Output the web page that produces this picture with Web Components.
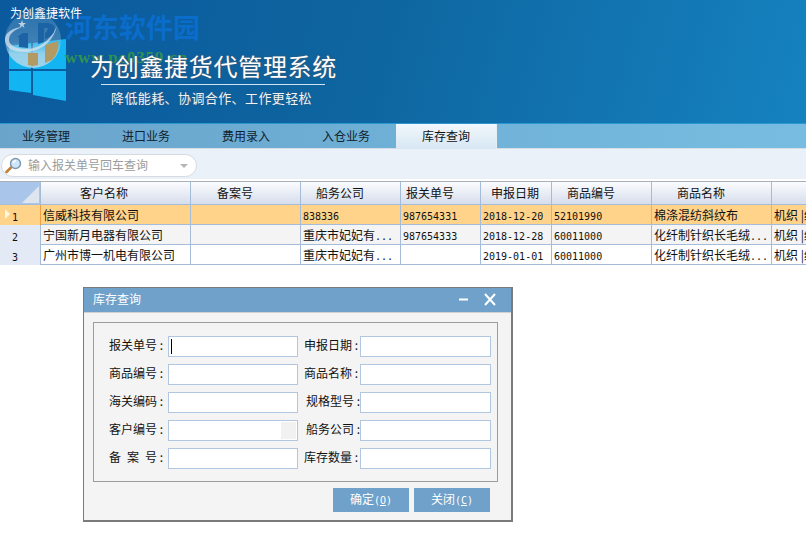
<!DOCTYPE html>
<html lang="zh-CN">
<head>
<meta charset="utf-8">
<title>为创鑫捷货代管理系统</title>
<style>
    html, body { margin: 0; height: 100%; background: #fff; overflow: hidden; }
    body { font: 12px "Noto Sans CJK SC", sans-serif; color: #111; position: relative; }
</style>
</head>
<body>
<app-banner></app-banner>
<nav-tabs>
    <tab-item>业务管理</tab-item>
    <tab-item>进口业务</tab-item>
    <tab-item>费用录入</tab-item>
    <tab-item>入仓业务</tab-item>
    <tab-item active>库存查询</tab-item>
</nav-tabs>
<search-box placeholder="输入报关单号回车查询"></search-box>
<data-grid></data-grid>
<query-dialog heading="库存查询">
    <form-field label="报关单号 :" caret></form-field>
    <form-field label="申报日期 :" style="--box-width:131px"></form-field>
    <form-field label="商品编号 :"></form-field>
    <form-field label="商品名称 :" style="--box-width:131px"></form-field>
    <form-field label="海关编码 :"></form-field>
    <form-field label="规格型号 :" style="--label-left:2px;--box-width:131px"></form-field>
    <form-field label="客户编号 :" picker></form-field>
    <form-field label="船务公司 :" style="--label-left:2px;--box-width:131px"></form-field>
    <form-field label="备&#8194;案&#8194;号 :"></form-field>
    <form-field label="库存数量 :" style="--box-width:131px"></form-field>
    <dlg-button slot="footer" key="O">确定</dlg-button>
    <dlg-button slot="footer" key="C">关闭</dlg-button>
</query-dialog>

<script>
// top banner with logo, watermark and product title
class AppBanner extends HTMLElement {
    constructor() {
        super();
        this.attachShadow({mode: "open"});
        this.shadowRoot.innerHTML = `
            <style>
                :host {
                    display: block;
                    height: 124px;
                    box-sizing: border-box;
                    position: relative;
                    overflow: hidden;
                    padding: 6px 0 0 10px;
                    color: #fff;
                    background: linear-gradient(105deg, #0b5a9e 0%, #0e659f 45%, #1582c0 100%);
                    border-bottom: 1px solid #2a97d0;
                }
                .caption { line-height: 13px; position: relative; z-index: 3; }
                .logo { position: absolute; left: 0; top: 0; z-index: 1; }
                .mark {
                    position: absolute; left: 65px; top: 10px; z-index: 1;
                    font: 700 27px/34px "Noto Sans CJK SC", sans-serif;
                    color: #0a6ccb; white-space: nowrap;
                }
                .url {
                    position: absolute; left: 65px; top: 49px; z-index: 1;
                    font: 700 17px/18px "Liberation Serif", serif;
                    letter-spacing: .8px; color: #2f9350; white-space: nowrap;
                }
                .title {
                    position: relative; z-index: 2;
                    margin: 32px 0 0 80px;
                    font-size: 24px; line-height: 30px; letter-spacing: .7px;
                    white-space: nowrap;
                    text-shadow: 0 0 3px #3c5a76, 0 0 1px #3c5a76;
                }
                .rule { position: relative; z-index: 2; height: 1px; width: 224px; margin: 3px 0 0 91px; background: #cfe3f2; }
                .sub {
                    position: relative; z-index: 2;
                    margin: 3px 0 0 101px;
                    font-size: 13px; line-height: 19px; letter-spacing: .4px;
                    white-space: nowrap; color: #eef4f8;
                    text-shadow: 0 0 2px #3c5a76;
                }
            </style>
            <svg class="logo" width="70" height="105" viewBox="0 0 70 105">
                <defs>
                    <linearGradient id="disc" x1="0" y1="0" x2="0" y2="1">
                        <stop offset="0" stop-color="#a9cfe6" stop-opacity=".2"/>
                        <stop offset=".55" stop-color="#a9cfe6" stop-opacity=".32"/>
                        <stop offset=".75" stop-color="#b5d8ea" stop-opacity=".8"/>
                        <stop offset="1" stop-color="#b5d8ea" stop-opacity=".85"/>
                    </linearGradient>
                </defs>
                <polygon points="9,46 31,43 31,69 9,69" fill="#12b5f2"/>
                <polygon points="33,43 66,39 66,69 33,69" fill="#12b5f2"/>
                <polygon points="9,71 31,71 31,93 9,90" fill="#12b5f2"/>
                <polygon points="33,71 66,71 66,101 33,95" fill="#12b5f2"/>
                <circle cx="33" cy="40" r="28" fill="url(#disc)"/>
                <path d="M28 53 H38 V65 L33 66 L28 65Z" fill="#b39a62"/>
                <path d="M45 45 L58 41 Q60 52 52 60 L45 63Z" fill="#b39a62"/>
                <path d="M22 27 C12 28 4 33 5 41 C6 48 13 52 24 52 C38 52 52 45 57 26 C52 37 42 49 26 49 C16 49 9 45 9 40 C9 34 14 30 22 27Z" fill="#d5e3ee" fill-opacity=".75"/>
                <path d="M19 47 V37 H17 L23 33 H28 V48Z" fill="#1c63a6"/>
                <path d="M38 44 V23 H48 Q57 24 54 32 Q50 38 45 39 V33 Q48 31 48 28 H44 V42Z" fill="#1c63a6"/>
                <polygon points="22,20 23,23 26,23 23.5,25 24.5,28 22,26 19.5,28 20.5,25 18,23 21,23" fill="#b9d0e4"/>
            </svg>
            <div class="mark">河东软件园</div>
            <div class="url">www.pc0359.cn</div>
            <div class="caption">为创鑫捷软件</div>
            <div class="title">为创鑫捷货代管理系统</div>
            <div class="rule"></div>
            <div class="sub">降低能耗、协调合作、工作更轻松</div>
        `;
    }
}
customElements.define('app-banner', AppBanner);

class NavTabs extends HTMLElement {
    constructor() {
        super();
        this.attachShadow({mode: "open"});
        this.shadowRoot.innerHTML = `
            <style>
                :host {
                    display: flex;
                    height: 25px;
                    box-sizing: border-box;
                    margin-left: -4px;
                    background: linear-gradient(90deg, #6aa4cb 0%, #6fb0d6 50%, #78bde1 100%);
                    border-bottom: 1px solid #d5dde6;
                }
            </style>
            <slot></slot>
        `;
    }
}
customElements.define('nav-tabs', NavTabs);

class TabItem extends HTMLElement {
    constructor() {
        super();
        this.attachShadow({mode: "open"});
        this.shadowRoot.innerHTML = `
            <style>
                :host {
                    display: block;
                    width: 100px;
                    height: 24px;
                    box-sizing: border-box;
                    padding-left: 26px;
                    line-height: 24px;
                    color: #10222f;
                }
                :host([active]) {
                    width: 101px;
                    height: 25px;
                    background: linear-gradient(#f2f7fb, #d6e7f3);
                    border-right: 1px solid #e6eef5;
                    color: #111;
                }
            </style>
            <slot></slot>
        `;
    }
}
customElements.define('tab-item', TabItem);

class SearchBox extends HTMLElement {
    constructor() {
        super();
        this.attachShadow({mode: "open"});
        this.shadowRoot.innerHTML = `
            <style>
                :host {
                    display: block;
                    height: 32px;
                    box-sizing: border-box;
                    padding: 5px 0 0 1px;
                    background: linear-gradient(#eaf1f9 30px, #fff 30px);
                }
                .pill {
                    display: flex;
                    align-items: center;
                    gap: 5px;
                    width: 196px;
                    height: 23px;
                    box-sizing: border-box;
                    padding: 0 8px 0 3px;
                    background: #fff;
                    border: 1px solid #d5dae1;
                    border-radius: 12px;
                }
                .hint { flex: 1; color: #9c9c9c; white-space: nowrap; line-height: 19px; padding-bottom: 2px; }
                .arrow { width: 0; height: 0; border: 4px solid transparent; border-top: 4px solid #b5b5b5; border-bottom: 0; }
            </style>
            <div class="pill">
                <svg width="18" height="17" viewBox="0 0 18 17">
                    <path d="M6 10.5 L1.5 15" stroke="#c5813a" stroke-width="2.6" stroke-linecap="round"/>
                    <circle cx="10.5" cy="6.5" r="5" fill="#cfe6f8" stroke="#7d97ad" stroke-width="1.4"/>
                    <path d="M8 6 Q8.5 4 11 3.6" stroke="#fff" stroke-width="1.4" fill="none"/>
                </svg>
                <span class="hint"></span>
                <span class="arrow"></span>
            </div>
        `;
    }

    connectedCallback() {
        this.shadowRoot.querySelector('.hint').textContent = this.getAttribute('placeholder');
    }
}
customElements.define('search-box', SearchBox);

// the columns, and how far each header caption sits from its column's left edge
const COLUMNS = [
    {title: "客户名称", width: 150, left: 39},
    {title: "备案号", width: 110, left: 26},
    {title: "船务公司", width: 100, left: 15},
    {title: "报关单号", width: 80, left: 5},
    {title: "申报日期", width: 71, left: 10},
    {title: "商品编号", width: 100, left: 15},
    {title: "商品名称", width: 120, left: 25},
    {title: "", width: 60, left: 0}
];

// values starting with # are the narrow digit cells
const ROWS = [
    ["信威科技有限公司", "", "#838336", "#987654331", "#2018-12-20", "#52101990", "棉涤混纺斜纹布", "机织 |经纬"],
    ["宁国新月电器有限公司", "", "重庆市妃妃有...", "#987654333", "#2018-12-28", "#60011000", "化纤制针织长毛绒...", "机织 |经纬"],
    ["广州市博一机电有限公司", "", "重庆市妃妃有...", "", "#2019-01-01", "#60011000", "化纤制针织长毛绒...", "机织 |经纬"]
];

class DataGrid extends HTMLElement {
    constructor() {
        super();
        this.attachShadow({mode: "open"});
    }

    connectedCallback() {
        const template = "41px " + COLUMNS.map(c => c.width + "px").join(" ");
        const head = COLUMNS.map(c =>
            `<div class="hd" style="padding-left:${c.left}px">${c.title}</div>`).join("");
        const body = ROWS.map((row, i) => {
            const cells = row.map(v => {
                if (v.startsWith("#")) return `<div class="td"><span class="num">${v.slice(1)}</span></div>`;
                return `<div class="td">${v.replace("...", '<span class="num">...</span>')}</div>`;
            }).join("");
            return `<div class="row r${i}"><div class="no">${i + 1}</div>${cells}</div>`;
        }).join("");
        this.shadowRoot.innerHTML = `
            <style>
                :host {
                    display: block;
                    overflow: hidden;
                    border-top: 1px solid #a8b0ba;
                }
                .row { display: grid; grid-template-columns: ${template}; height: 20px; box-sizing: border-box; border-bottom: 1px solid #a5bcd9; white-space: nowrap; }
                .head { height: 23px; border-bottom: 1px solid #a5bcd9; background: linear-gradient(#fbfcfe, #d6ddec); }
                .corner { background: #a9c6ea; border-right: 1px solid #a5bcd9; position: relative; box-sizing: border-box; }
                .corner::after {
                    content: ""; position: absolute; right: 1px; bottom: 1px;
                    width: 0; height: 0;
                    border-left: 17px solid transparent;
                    border-bottom: 17px solid #dfe5ef;
                }
                .hd { box-sizing: border-box; border-right: 1px solid #a5bcd9; line-height: 22px; overflow: hidden; color: #111; }
                .no { box-sizing: border-box; border-right: 1px solid #a5bcd9; background: #e3e9f5; padding: 6px 0 0 12px; font: 10px/14px "DejaVu Sans Mono", monospace; position: relative; }
                .td { box-sizing: border-box; border-right: 1px solid #a5bcd9; padding-left: 2px; line-height: 19px; overflow: hidden; }
                .num { font: 10px/19px "DejaVu Sans Mono", monospace; }
                .r0 { background: #ffd38a; }
                .r0 .no { background: #ffd38a; border-right-color: #f0a040; box-shadow: 0 1px 0 #f0a040; }
                .r0 .no::before {
                    content: ""; position: absolute; left: 5px; top: 4px;
                    width: 0; height: 0;
                    border-left: 5px solid #fff6dc;
                    border-top: 5px solid transparent;
                    border-bottom: 5px solid transparent;
                }
                .r1 { background: #f4f4f4; }
                .r2 { background: #fff; }
            </style>
            <div class="row head"><div class="corner"></div>${head}</div>
            ${body}
        `;
    }
}
customElements.define('data-grid', DataGrid);

// floating window, sits over the page
class QueryDialog extends HTMLElement {
    constructor() {
        super();
        this.attachShadow({mode: "open"});
        this.shadowRoot.innerHTML = `
            <style>
                :host {
                    display: flex;
                    flex-direction: column;
                    position: absolute;
                    left: 83px;
                    top: 287px;
                    width: 430px;
                    height: 235px;
                    box-sizing: border-box;
                    background: #f4f4f4;
                    border: 1px solid #7b7b7b;
                    border-right-width: 2px;
                    border-bottom-width: 2px;
                }
                .bar {
                    display: flex;
                    align-items: center;
                    height: 24px;
                    flex: none;
                    padding: 0 15px 0 9px;
                    background: #6fa1ca;
                    color: #fff;
                    border-bottom: 1px solid #d0d0d0;
                }
                .bar .name { flex: 1; line-height: 20px; padding-bottom: 2px; }
                .bar svg { display: block; margin-bottom: 2px; }
                .group {
                    display: grid;
                    grid-template-columns: 189px 187px;
                    grid-auto-rows: 20px;
                    column-gap: 6px;
                    row-gap: 8px;
                    align-content: start;
                    height: 160px;
                    width: 405px;
                    box-sizing: border-box;
                    margin: 9px 0 0 9px;
                    padding: 13px 0 0 15px;
                    border: 1px solid #9c9c9c;
                }
                .foot {
                    display: flex;
                    justify-content: flex-end;
                    gap: 5px;
                    width: 406px;
                    margin-top: 6px;
                }
            </style>
            <div class="bar">
                <span class="name"></span>
                <svg width="38" height="13" viewBox="0 0 38 13">
                    <path d="M1 6.5 H10" stroke="#fff" stroke-width="2"/>
                    <path d="M27 1 L37 12 M37 1 L27 12" stroke="#fff" stroke-width="2"/>
                </svg>
            </div>
            <div class="group"><slot></slot></div>
            <div class="foot"><slot name="footer"></slot></div>
        `;
    }

    connectedCallback() {
        this.shadowRoot.querySelector('.name').textContent = this.getAttribute('heading');
    }
}
customElements.define('query-dialog', QueryDialog);

class FormField extends HTMLElement {
    constructor() {
        super();
        this.attachShadow({mode: "open"});
        this.shadowRoot.innerHTML = `
            <style>
                :host { display: flex; align-items: flex-start; justify-content: space-between; height: 20px; }
                .label { padding-left: var(--label-left, 0); white-space: pre; line-height: 18px; }
                .box {
                    position: relative;
                    width: var(--box-width, 130px);
                    height: 21px;
                    box-sizing: border-box;
                    background: #fff;
                    border: 1px solid #b1c7e1;
                }
                :host([picker]) .box::after {
                    content: ""; position: absolute; right: 1px; top: 1px;
                    width: 15px; height: 17px; background: #f1f1f1;
                }
                :host([caret]) .box::before {
                    content: ""; position: absolute; left: 2px; top: 2px;
                    width: 1px; height: 15px; background: #000;
                }
            </style>
            <span class="label"></span>
            <div class="box"></div>
        `;
    }

    connectedCallback() {
        this.shadowRoot.querySelector('.label').textContent = this.getAttribute('label');
    }
}
customElements.define('form-field', FormField);

class DlgButton extends HTMLElement {
    constructor() {
        super();
        this.attachShadow({mode: "open"});
        this.shadowRoot.innerHTML = `
            <style>
                :host {
                    display: block;
                    width: 76px;
                    height: 24px;
                    background: #6fa1ca;
                    color: #fff;
                    text-align: center;
                    line-height: 22px;
                }
                .key { font: 10px "DejaVu Sans Mono", monospace; }
            </style>
            <slot></slot><span class="key">(<u></u>)</span>
        `;
    }

    connectedCallback() {
        this.shadowRoot.querySelector('u').textContent = this.getAttribute('key');
    }
}
customElements.define('dlg-button', DlgButton);
</script>
</body>
</html>
